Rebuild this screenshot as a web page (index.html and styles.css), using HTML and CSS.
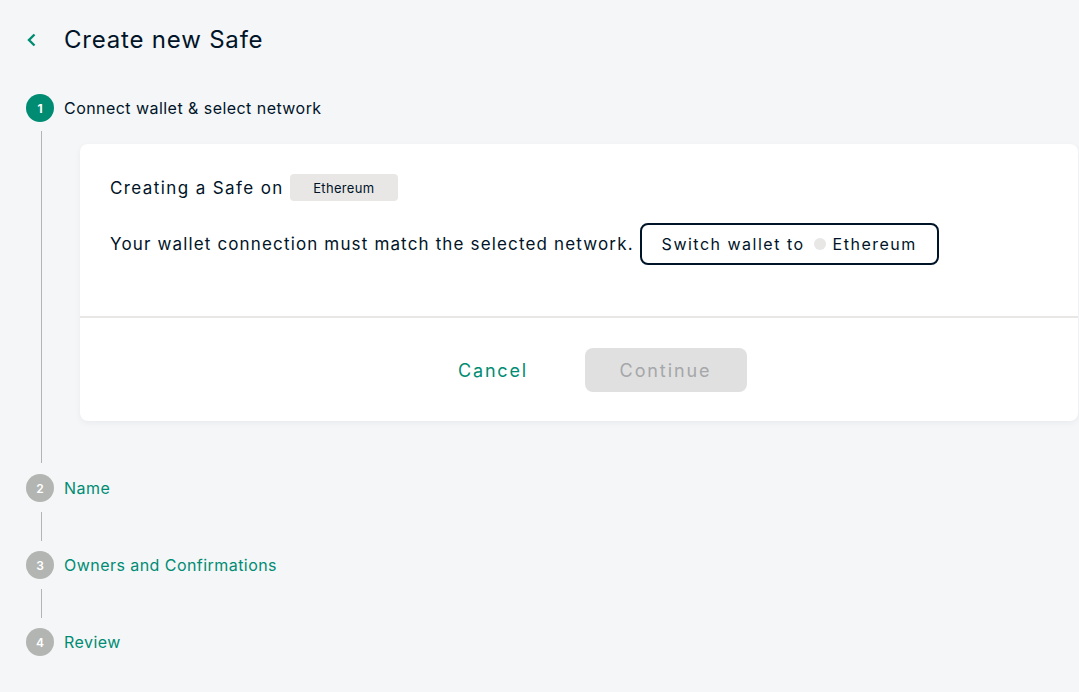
FILE: index.html
```html
<!DOCTYPE html>
<html lang="en">
<head>
<meta charset="utf-8">
<title>Create new Safe</title>
<link rel="stylesheet" href="styles.css">
</head>
<body>
<div class="page">
  <header class="header">
    <button class="back" aria-label="Back">
      <svg width="12" height="14" viewBox="0 0 12 14"><path d="M8.5 1.5 L3 7 L8.5 12.5" fill="none" stroke="#008c73" stroke-width="2.4"/></svg>
    </button>
    <h1 class="title">Create new Safe</h1>
  </header>

  <div class="stepper">
    <div class="step">
      <div class="step-head">
        <span class="step-icon active">1</span>
        <span class="step-label active">Connect wallet &amp; select network</span>
      </div>
      <div class="step-body">
        <div class="card">
          <div class="card-main">
            <div class="row">
              <span class="text text-lead">Creating a Safe on</span>
              <span class="chip">Ethereum</span>
            </div>
            <div class="row row-gap">
              <span class="text">Your wallet connection must match the selected network.</span>
              <button class="switch-btn">Switch wallet to <span class="dot"></span> Ethereum</button>
            </div>
          </div>
          <div class="card-footer">
            <button class="btn-cancel">Cancel</button>
            <button class="btn-continue" disabled>Continue</button>
          </div>
        </div>
      </div>
    </div>

    <div class="step">
      <div class="step-head">
        <span class="step-icon">2</span>
        <span class="step-label">Name</span>
      </div>
      <div class="connector"></div>
    </div>
    <div class="step">
      <div class="step-head">
        <span class="step-icon">3</span>
        <span class="step-label">Owners and Confirmations</span>
      </div>
      <div class="connector"></div>
    </div>
    <div class="step">
      <div class="step-head">
        <span class="step-icon">4</span>
        <span class="step-label">Review</span>
      </div>
    </div>
  </div>
</div>
</body>
</html>
```

FILE: styles.css
```css
* { box-sizing: border-box; }
html, body { margin: 0; padding: 0; }
body {
  background: #f5f6f8;
  font-family: "Inter", "Noto Sans", sans-serif;
  color: #001428;
  width: 1079px;
  height: 692px;
  overflow: hidden;
}
.page { padding: 24px 1px 0 26px; }

.header {
  display: flex;
  align-items: center;
  height: 32px;
}
.back {
  width: 38px;
  padding: 0;
  border: 0;
  background: none;
  display: flex;
  align-items: center;
  justify-content: flex-start;
  cursor: pointer;
}
.title {
  margin: 0;
  font-size: 24px;
  font-weight: 400;
  line-height: 32px;
  letter-spacing: 0.8px;
  color: #001428;
}

.stepper { margin-top: 38px; }
.step-head {
  display: flex;
  align-items: center;
  height: 28px;
}
.step-icon {
  width: 28px;
  height: 28px;
  border-radius: 50%;
  background: #b2b5b2;
  color: #fff;
  font-size: 12px;
  font-weight: 600;
  display: flex;
  align-items: center;
  justify-content: center;
  flex: none;
}
.step-icon.active { background: #008c73; font-weight: 700; }
.step-label {
  margin-left: 10px;
  font-size: 16px;
  letter-spacing: 0.45px;
  color: #008c73;
}
.step-label.active { color: #001428; }

.step-body {
  margin: 9px 0 11px 15px;
  border-left: 1px solid #b2b5b2;
  padding: 13px 0 42px 38px;
}
.connector {
  margin: 10px 0 10px 15px;
  height: 29px;
  border-left: 1px solid #b2b5b2;
}

.card {
  background: #fff;
  border-radius: 8px;
  box-shadow: 0 2px 6px rgba(0, 20, 40, 0.05);
}
.card-main {
  padding: 30px 30px 51px 30px;
  border-bottom: 2px solid #e8e7e6;
}
.row {
  display: flex;
  align-items: center;
  gap: 6px;
}
.row-gap { margin-top: 22px; }
.text { font-size: 17px; letter-spacing: 1.15px; }
.text-lead { letter-spacing: 1.4px; }
.chip {
  display: inline-flex;
  align-items: center;
  justify-content: center;
  width: 108px;
  height: 27px;
  border-radius: 4px;
  background: #e8e7e6;
  font-size: 13px;
  letter-spacing: 0.3px;
}
.switch-btn {
  height: 42px;
  width: 299px;
  border: 2px solid #001428;
  border-radius: 8px;
  background: #fff;
  font-family: inherit;
  font-size: 16px;
  letter-spacing: 1.5px;
  color: #001428;
  display: flex;
  align-items: center;
  justify-content: center;
  padding: 0;
  flex: none;
}
.dot {
  display: inline-block;
  width: 12px;
  height: 12px;
  border-radius: 50%;
  background: #e8e7e6;
  margin: 0 7px 0 9px;
}

.card-footer {
  display: flex;
  justify-content: center;
  align-items: center;
  gap: 24px;
  padding: 30px 0 29px 14px;
}
.card-footer button { font-family: inherit; font-size: 18px; }
.btn-cancel {
  border: 0;
  background: none;
  color: #008c73;
  width: 135px;
  height: 44px;
  letter-spacing: 1.8px;
}
.btn-continue {
  border: 0;
  width: 162px;
  height: 44px;
  border-radius: 8px;
  background: #e0e0e0;
  color: #a5a7a9;
  letter-spacing: 1.9px;
}
```
